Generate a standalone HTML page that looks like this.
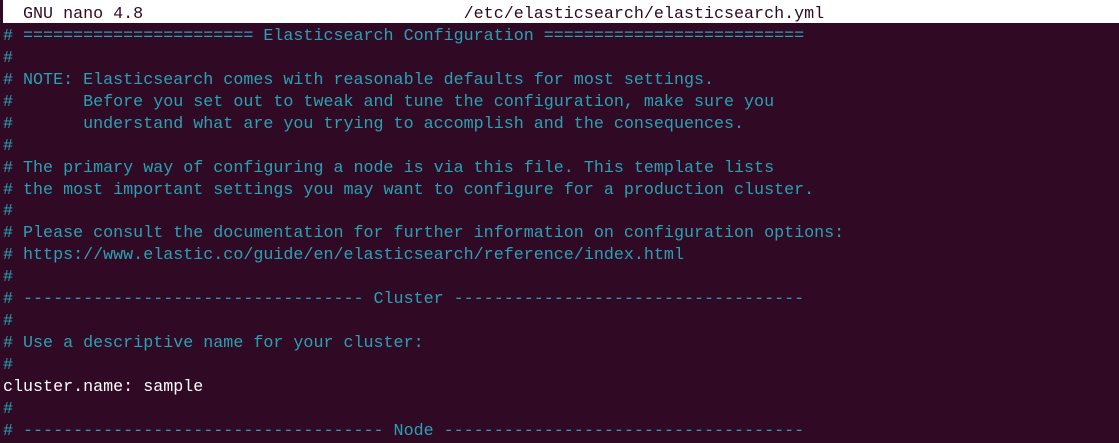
<!DOCTYPE html>
<html><head><style>
html,body{margin:0;padding:0;background:#300a24;width:1119px;height:440px;overflow:hidden}
.t{position:absolute;left:3px;top:4px;font-family:"Liberation Mono",monospace;font-size:16.7px;line-height:21.94px;white-space:pre;color:#2aa1b3}
.bar{position:absolute;left:3px;top:0;width:1116px;height:23px;background:#fff}
.bt{color:#300a24}
.w{color:#fff}
</style></head><body>
<div class="bar"></div>
<div class="t"><span class="bt">  GNU nano 4.8                                /etc/elasticsearch/elasticsearch.yml</span>
# ======================= Elasticsearch Configuration ==========================
#
# NOTE: Elasticsearch comes with reasonable defaults for most settings.
#       Before you set out to tweak and tune the configuration, make sure you
#       understand what are you trying to accomplish and the consequences.
#
# The primary way of configuring a node is via this file. This template lists
# the most important settings you may want to configure for a production cluster.
#
# Please consult the documentation for further information on configuration options:
# https://www.elastic.co/guide/en/elasticsearch/reference/index.html
#
# ---------------------------------- Cluster -----------------------------------
#
# Use a descriptive name for your cluster:
#
<span class="w">cluster.name: sample</span>
#
# ------------------------------------ Node ------------------------------------</div>
</body></html>
